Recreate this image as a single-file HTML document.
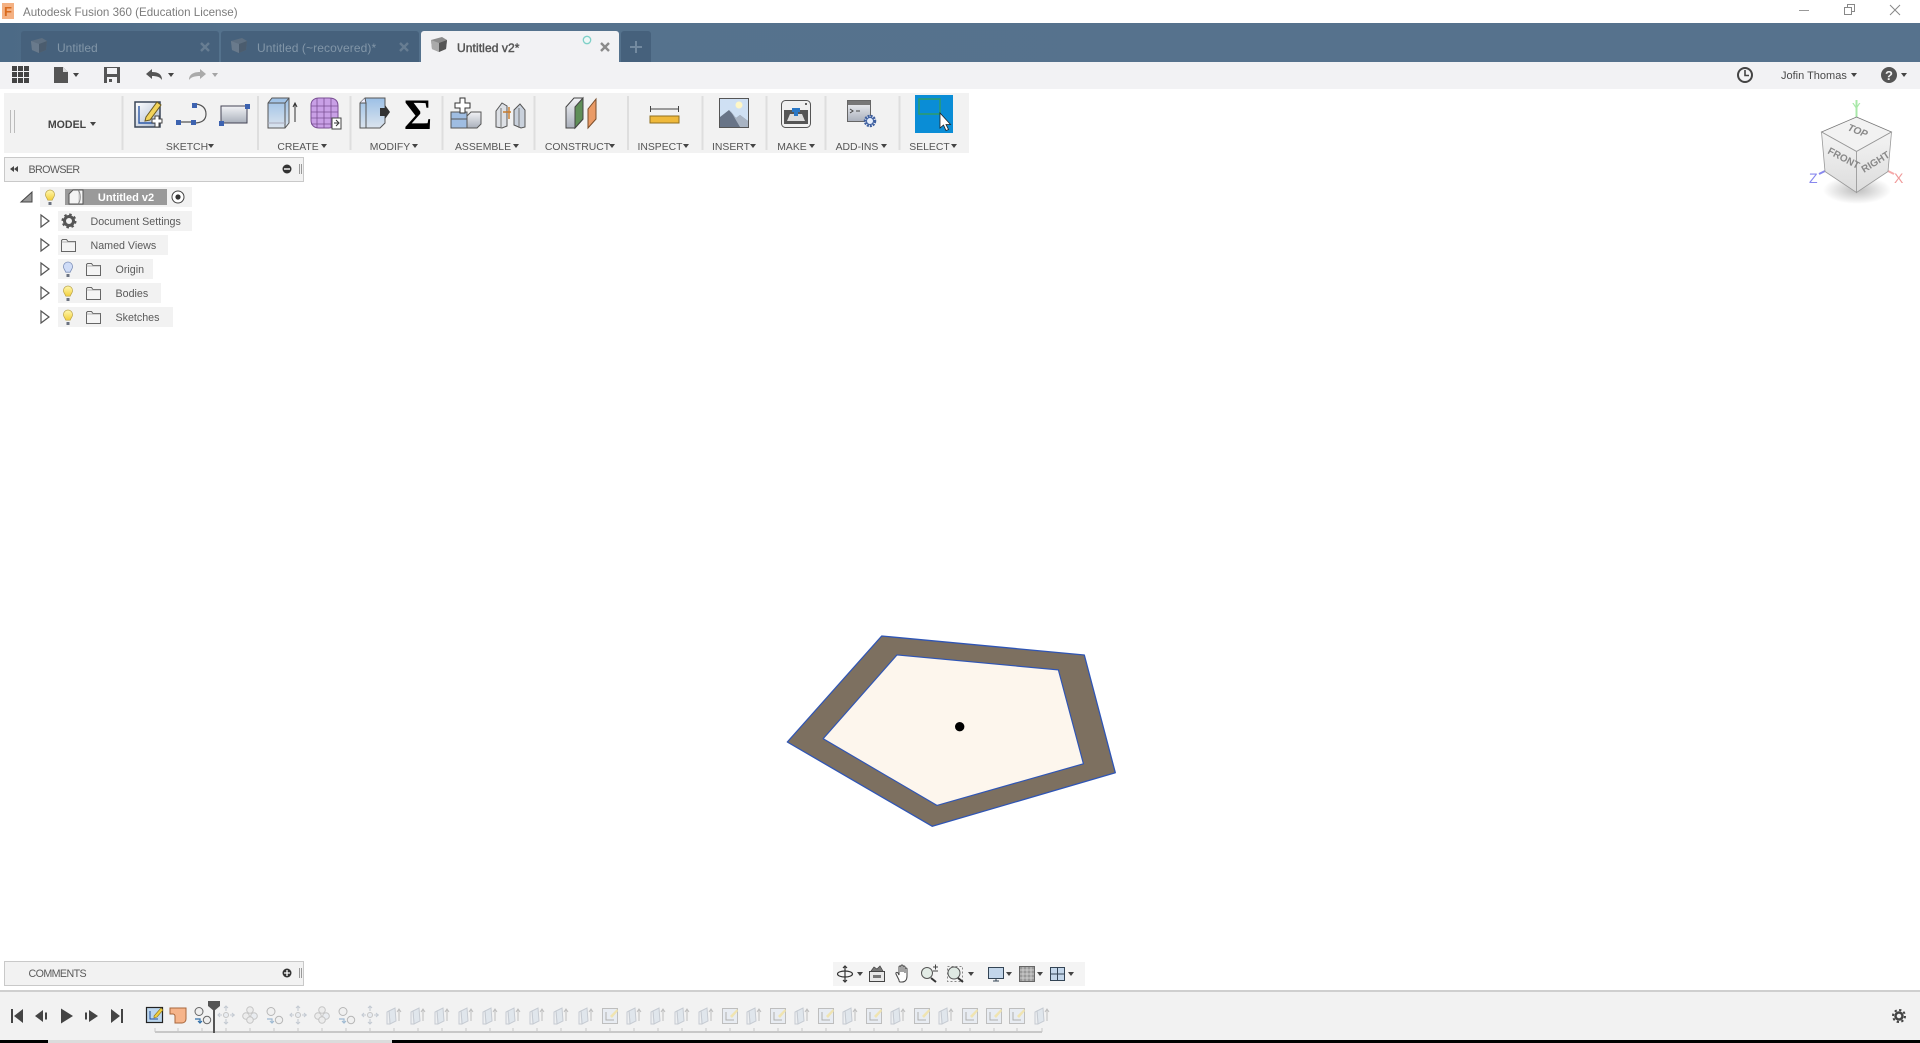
<!DOCTYPE html>
<html><head><meta charset="utf-8"><title>Autodesk Fusion 360</title>
<style>
html,body{margin:0;padding:0;background:#fff;width:1920px;height:1043px;overflow:hidden}
svg{display:block;position:absolute;left:0;top:0}
text{font-family:"Liberation Sans",sans-serif;font-size:11px;fill:#555}
.l{font-size:10.4px;text-anchor:middle;fill:#555}
.t{font-size:10.7px;fill:#5a5a5a}
</style></head><body>
<svg width="1920" height="1043" viewBox="0 0 1920 1043" xmlns="http://www.w3.org/2000/svg">
<defs>
<linearGradient id="tb" x1="0" y1="0" x2="1" y2="0"><stop offset="0" stop-color="#4c6a86"/><stop offset=".12" stop-color="#55728d"/><stop offset="1" stop-color="#56728d"/></linearGradient>
<linearGradient id="gbl" x1="0" y1="0" x2="0" y2="1"><stop offset="0" stop-color="#9cc0e6"/><stop offset="1" stop-color="#dbe4ee"/></linearGradient>
<linearGradient id="ggr" x1="0" y1="0" x2="0" y2="1"><stop offset="0" stop-color="#f2f3f6"/><stop offset="1" stop-color="#aab0bb"/></linearGradient>
<linearGradient id="gsk" x1="0" y1="0" x2="1" y2="1"><stop offset="0" stop-color="#fff"/><stop offset="1" stop-color="#a9b7cc"/></linearGradient>
<linearGradient id="gcube" x1="0" y1="0" x2="0" y2="1"><stop offset="0" stop-color="#f4f4f4"/><stop offset="1" stop-color="#dcdcdc"/></linearGradient>
<linearGradient id="gbulb" x1="0" y1="0" x2="0" y2="1"><stop offset="0" stop-color="#fff8b0"/><stop offset="1" stop-color="#f3cf3b"/></linearGradient>
<radialGradient id="gshadow"><stop offset="0" stop-color="#888" stop-opacity=".55"/><stop offset="1" stop-color="#888" stop-opacity="0"/></radialGradient>
<polygon id="a" points="0,0 6,0 3,4" fill="#444"/>
<g id="tabcube"><path d="M0 3 L11 0 L16 3 L15 12 L8 15 L1 12Z" fill="#8b8b8b"/><path d="M8 6 L16 3 L15 12 L8 15Z" fill="#555"/><path d="M0 3 L8 6 L8 15 L1 12Z" fill="#aaa"/></g>
<g id="bulb"><path d="M-1.5 6h3v3h-3z" fill="#6b7280"/><path d="M0-6a4.6 4.6 0 0 1 4.6 4.6c0 2.2-1.6 3.2-2.4 5.6h-4.4c-.8-2.4-2.4-3.4-2.4-5.6A4.6 4.6 0 0 1 0-6z" fill="url(#gbulb)" stroke="#b9a24a" stroke-width=".7"/></g>
<g id="bulbb"><path d="M-1.5 6h3v3h-3z" fill="#6b7280"/><path d="M0-6a4.6 4.6 0 0 1 4.6 4.6c0 2.2-1.6 3.2-2.4 5.6h-4.4c-.8-2.4-2.4-3.4-2.4-5.6A4.6 4.6 0 0 1 0-6z" fill="#cfdcf7" stroke="#7c8fb8" stroke-width=".8"/></g>
<g id="fold"><path d="M.5 2.5 V13.5 H14.5 V3.5 H7 L5.5 1.5 H1.5Z" fill="#f4f4f4" stroke="#666" stroke-width="1"/><path d="M.5 4H14.5" stroke="#999" stroke-width=".7"/></g>
<polygon id="exp" points="0,0 8,6 0,12" fill="#fff" stroke="#555" stroke-width="1.2"/>
<g id="tx"><path d="M3 4 L9 1 L10 14 L4 17 Z" fill="#c9d6e6" stroke="#8b97a8"/><path d="M3 4 L1 5 V17 L4 17Z" fill="#e8ecf1" stroke="#8b97a8"/><path d="M13 14V3M11 5l2-3 2 3" stroke="#777" fill="none" stroke-width="1"/></g>
<g id="ts"><rect x=".5" y="1.5" width="15" height="15" fill="#dce6f2" stroke="#777"/><path d="M4 5V13H12" stroke="#555" fill="none"/><path d="M8 9l7-7 1 2-6 7z" fill="#eed25a"/></g>
<g id="tm"><circle cx="8" cy="9" r="2.5" fill="#dfe6ee" stroke="#888"/><path d="M8 0v5M8 13v5M0 9h4M12 9h5M6 2l2-2 2 2M6 16l2 2 2-2M2 7l-2 2 2 2M14 7l2 2-2 2" stroke="#8595a8" fill="none" stroke-width="1.1"/></g>
<g id="tc"><circle cx="8" cy="4" r="3.3" fill="#e4e4e4" stroke="#888"/><circle cx="4" cy="10" r="3.3" fill="#e4e4e4" stroke="#888"/><circle cx="12" cy="10" r="3.3" fill="#dfe6ee" stroke="#888"/><circle cx="8" cy="14" r="3.3" fill="#e4e4e4" stroke="#888"/></g>
<g id="ta"><circle cx="5" cy="4.5" r="4" fill="#eee" stroke="#666"/><circle cx="13" cy="13" r="3.7" fill="#eee" stroke="#666"/><path d="M1 12h5v4M4 14l2 2 2-2" stroke="#2f6ea8" fill="none" stroke-width="1.2"/></g>
</defs>

<!-- title bar -->
<rect width="1920" height="23" fill="#fff"/>
<rect x="2" y="3" width="12" height="16" fill="#f4b183"/>
<text x="4" y="16" style="font-size:13px;font-weight:bold;fill:#d96a1d">F</text>
<text x="23" y="16" style="font-size:11.6px;fill:#7c7c7c">Autodesk Fusion 360 (Education License)</text>
<path d="M1799 10.5H1809" stroke="#999"/>
<path d="M1844.5 7.5H1851.5V14.5H1844.5ZM1847.5 7.5V4.5H1854.5V11.5H1851.5" fill="none" stroke="#888"/>
<path d="M1890 5L1900 15M1900 5L1890 15" stroke="#888"/>

<!-- tab bar -->
<rect y="23" width="1920" height="39" fill="url(#tb)"/>
<path d="M21 62V34a3 3 0 0 1 3-3H216a3 3 0 0 1 3 3V62Z" fill="#46617c"/>
<path d="M221 62V34a3 3 0 0 1 3-3H416a3 3 0 0 1 3 3V62Z" fill="#46617c"/>
<path d="M621 62V34a3 3 0 0 1 3-3H648a3 3 0 0 1 3 3V62Z" fill="#46617c"/>
<path d="M421 62V34a3 3 0 0 1 3-3H616a3 3 0 0 1 3 3V62Z" fill="#f2f2f4"/>
<use href="#tabcube" x="31" y="38" opacity=".35"/>
<use href="#tabcube" x="231" y="38" opacity=".35"/>
<use href="#tabcube" x="431" y="37"/>
<text x="57" y="52" style="font-size:12px;fill:#8296a8">Untitled</text>
<text x="257" y="52" style="font-size:12px;fill:#8296a8;letter-spacing:.1px">Untitled (~recovered)*</text>
<text x="457" y="52" style="font-size:12px;fill:#555;stroke:#555;stroke-width:.45;letter-spacing:.1px">Untitled v2*</text>
<path d="M201 43l8 8M209 43l-8 8M400 43l8 8M408 43l-8 8" stroke="#677d92" stroke-width="2.4"/>
<path d="M601 43l8 8M609 43l-8 8" stroke="#8a8a8a" stroke-width="2.4"/>
<path d="M630 47h12M636 41v12" stroke="#738aa0" stroke-width="2"/>
<circle cx="587" cy="40" r="3.7" fill="#eef7f6" stroke="#7fd0c8" stroke-width="1.3"/>

<!-- quick toolbar -->
<rect y="62" width="1920" height="27" fill="#f2f2f4"/>
<path d="M12 66h5v5h-5zM18 66h5v5h-5zM24 66h5v5h-5zM12 72h5v5h-5zM18 72h5v5h-5zM24 72h5v5h-5zM12 78h5v5h-5zM18 78h5v5h-5zM24 78h5v5h-5z" fill="#444"/>
<path d="M54 67h9l5 5v11H54z" fill="#555"/><path d="M63 67v5h5" fill="#ddd"/>
<use href="#a" x="73" y="73"/>
<path d="M104 67h16v16h-16z" fill="#555"/><rect x="107" y="68" width="10" height="6" fill="#f2f2f4"/><rect x="107" y="77" width="10" height="6" fill="#f2f2f4"/><rect x="109" y="79" width="3" height="3" fill="#555"/>
<path d="M146 74l6-5v3c6 0 10 2 10 8-2-3-5-4-10-4v3z" fill="#555"/>
<use href="#a" x="168" y="73"/>
<path d="M206 74l-6-5v3c-6 0-11 2-11 8 2-3 6-4 11-4v3z" fill="#aaa"/>
<use href="#a" x="212" y="73" opacity=".45"/>
<circle cx="1745" cy="75" r="7" fill="none" stroke="#444" stroke-width="2"/><path d="M1745 70v5.5h4" fill="none" stroke="#444" stroke-width="1.6"/>
<text x="1781" y="79" style="font-size:11px;fill:#4a4a4a">Jofin Thomas</text>
<use href="#a" x="1851" y="73"/>
<circle cx="1889" cy="75" r="8" fill="#555"/><text x="1889" y="80" style="font-size:13px;font-weight:bold;fill:#f2f2f2;text-anchor:middle">?</text>
<use href="#a" x="1901" y="73"/>

<!-- ribbon -->
<rect x="4" y="93" width="965" height="60" fill="#f2f2f2"/>
<path d="M10.5 110V133M14.5 110V133" stroke="#bbb"/>
<text x="67" y="128" style="font-size:10.6px;font-weight:bold;text-anchor:middle;fill:#444">MODEL</text>
<use href="#a" x="90" y="122"/>
<g fill="#dedede">
<rect x="121.500" y="96" width="2" height="54"/><rect x="257" y="96" width="2" height="54"/><rect x="349.500" y="96" width="2" height="54"/><rect x="441.500" y="96" width="2" height="54"/><rect x="533.500" y="96" width="2" height="54"/><rect x="627" y="96" width="2" height="54"/><rect x="701.500" y="96" width="2" height="54"/><rect x="765.500" y="96" width="2" height="54"/><rect x="824.500" y="96" width="2" height="54"/><rect x="898.500" y="96" width="2" height="54"/>
</g>
<text class="l" x="187" y="150">SKETCH</text><use href="#a" x="208" y="144" />
<text class="l" x="298" y="150">CREATE</text><use href="#a" x="321" y="144"/>
<text class="l" x="390" y="150">MODIFY</text><use href="#a" x="412" y="144"/>
<text class="l" x="483" y="150">ASSEMBLE</text><use href="#a" x="513" y="144"/>
<text class="l" x="577.500" y="150">CONSTRUCT</text><use href="#a" x="609" y="144"/>
<text class="l" x="660" y="150">INSPECT</text><use href="#a" x="683" y="144"/>
<text class="l" x="731" y="150">INSERT</text><use href="#a" x="750" y="144"/>
<text class="l" x="792" y="150">MAKE</text><use href="#a" x="809" y="144"/>
<text class="l" x="857" y="150">ADD-INS</text><use href="#a" x="881" y="144"/>
<text class="l" x="929.500" y="150">SELECT</text><use href="#a" x="951" y="144"/>

<!-- sketch -->
<rect x="135" y="102" width="25" height="25" fill="url(#gsk)" stroke="#3b4658" stroke-width="1.5"/>
<path d="M139 106V123H156" stroke="#2e5aa8" fill="none" stroke-width="1.4"/>
<path d="M146 117l11-15 4 3-11 15-5 1z" fill="#f2d35a" stroke="#6b5a20"/>
<path d="M152 119h3v-3h4v3h3v4h-3v4h-4v-4h-3z" fill="#fff" stroke="#444"/>
<!-- line -->
<path d="M178 122H194M194 104c8 0 12 4 12 10s-4 9-12 9" fill="none" stroke="#555" stroke-width="1.2"/>
<rect x="176" y="120" width="5" height="5" fill="#3d63b0"/><rect x="191" y="120" width="5" height="5" fill="#3d63b0"/><rect x="192" y="103" width="5" height="5" fill="#3d63b0"/>
<!-- rect -->
<rect x="221" y="106" width="26" height="17" fill="url(#ggr)" stroke="#445" stroke-width="1"/>
<rect x="219" y="121" width="5" height="5" fill="#3d63b0"/><rect x="245" y="104" width="5" height="5" fill="#3d63b0"/>
<!-- extrude -->
<path d="M268 103l4-5h17v25l-4 5h-17z" fill="url(#gbl)" stroke="#555"/><path d="M285 103v25M268 103h17l4-5" fill="none" stroke="#555"/><path d="M268 123h17" stroke="#aab"/>
<path d="M295 122V104M293 107l2-4 2 4" stroke="#333" fill="none"/>
<!-- form -->
<path d="M311 105c0-5 4-7 8-7h10c6 0 9 3 9 8v14c0 5-5 8-9 8h-10c-5 0-8-3-8-8z" fill="#c9a0e6" stroke="#7a4f94"/>
<path d="M311 106h27M311 112h27M311 118h27M311 124h27M317 98v30M324 98v30M331 98v30" stroke="#7a4f94" fill="none" stroke-width=".8"/>
<rect x="332" y="118" width="9" height="11" fill="#fff" stroke="#444"/><path d="M334 123h4M336 120l3 3-3 3" fill="none" stroke="#333"/>
<!-- modify -->
<path d="M360 103l5-5h20v25l-5 5h-20z" fill="url(#gbl)" stroke="#555"/><path d="M366 103v25M360 103h6l-1-5" fill="#eef" stroke="#555"/><path d="M380 108h5v-3l5 7-5 7v-3h-5z" fill="#333"/>
<!-- sigma -->
<text x="404" y="129" style="font-size:43px;fill:#000;font-family:'Liberation Serif',serif;font-weight:bold">Σ</text>
<!-- assemble -->
<path d="M451 112h16v16h-16z" fill="#9fbde2" stroke="#555"/><path d="M467 116l4-4h10v12l-4 4h-10z" fill="url(#ggr)" stroke="#555"/><path d="M451 119h16" stroke="#555"/>
<path d="M455 103h5v-5h5v5h5v5h-5v5h-5v-5h-5z" fill="#fff" stroke="#333"/>
<!-- joint -->
<path d="M496 127V111l6-8 5 3v20l-5 2z" fill="#dde0e5" stroke="#555"/><path d="M525 127V110l-5-6-6 6v15l7 3z" fill="#c9d1dc" stroke="#555"/><path d="M503 112h8M509 107v12" stroke="#c77a2b" stroke-width="1.4"/><path d="M501 128V108M519 128V108" stroke="#777"/>
<!-- construct -->
<path d="M566 107l8-9h9v21l-8 9h-9z" fill="url(#ggr)" stroke="#444"/><path d="M575 107l8-9v21l-8 9z" fill="#5f8f58" stroke="#444"/>
<path d="M588 109l8-10v20l-8 9z" fill="#ea9b66" stroke="#7a4d2a"/>
<!-- inspect -->
<path d="M650.500 106v6M678.500 106v6M650.500 109h28" stroke="#444" fill="none"/>
<rect x="650" y="116" width="29" height="7" fill="#efb93b" stroke="#907020"/>
<!-- insert -->
<rect x="719.500" y="98.500" width="29" height="29" fill="#cfe0f3" stroke="#555"/>
<circle cx="739" cy="105" r="3.5" fill="#fff7c6"/>
<path d="M720 127v-10l9-7 7 8 4-3 8 6v6z" fill="#687487"/><path d="M730 110l6 8 4-3 8 6v6h-8z" fill="#a9b4c3"/>
<!-- make -->
<rect x="781.500" y="100.500" width="29" height="27" rx="4" fill="#f0f0f0" stroke="#555"/>
<rect x="784" y="110" width="24" height="14" fill="#555"/><path d="M787 121l3-7h12l3 7z" fill="#ddd"/><path d="M792 108h8v4h-2v4h-4v-4h-2z" fill="#2a77c5"/><circle cx="806" cy="104" r="1" fill="#333"/>
<!-- add-ins -->
<rect x="847.500" y="100.500" width="23" height="21" fill="url(#ggr)" stroke="#666"/><rect x="848" y="101" width="22" height="4" fill="#777"/>
<path d="M850 109l3 2-3 2M856 111h4" stroke="#444" fill="none"/>
<circle cx="870" cy="121" r="5" fill="#e6eefb" stroke="#3f60a0" stroke-width="2.5" stroke-dasharray="2 1"/><circle cx="870" cy="121" r="3.5" fill="#e6eefb" stroke="#3f60a0"/>
<!-- select -->
<rect x="915" y="95" width="38" height="38" fill="#0a8dd6"/>
<rect x="919" y="99" width="21" height="15" fill="none" stroke="#2e9c6a" stroke-width="1.5"/>
<path d="M940 113V128L943.500 125L946 130.500L948.500 129.500L946 124.500H950.500Z" fill="#fff" stroke="#222" stroke-width=".8"/>

<!-- browser -->
<rect x="4.500" y="157.500" width="299" height="24" fill="#f2f2f2" stroke="#c9c9c9"/>
<path d="M10 169l4-3v6zM14 169l4-3v6z" fill="#444"/>
<text x="28.500" y="173" class="t" style="letter-spacing:-.6px">BROWSER</text>
<circle cx="287" cy="169" r="4.500" fill="#333"/><path d="M284 169h6" stroke="#fff" stroke-width="1.4"/>
<path d="M299.500 164v10M301.500 164v10" stroke="#999"/>

<g fill="#f2f2f2">
<rect x="40" y="187" width="152" height="20"/>
<rect x="58" y="211" width="134" height="20"/>
<rect x="58" y="235" width="110" height="20"/>
<rect x="58" y="259" width="95" height="20"/>
<rect x="58" y="283" width="103" height="20"/>
<rect x="58" y="307" width="115" height="20"/>
</g>
<path d="M21 202L32 192V202Z" fill="#999" stroke="#444"/>
<use href="#bulb" x="50" y="196"/>
<rect x="65" y="189" width="102" height="16" fill="#9a9a9a"/>
<path d="M69 204V194l4-4h10v14z" fill="#f4f4f4" stroke="#555"/><path d="M78 190c3 3 3 11 0 14" fill="#ddd" stroke="#888"/>
<text x="126" y="201" style="font-size:11px;font-weight:bold;fill:#fff;text-anchor:middle">Untitled v2</text>
<circle cx="178" cy="197" r="6" fill="#fff" stroke="#444"/><circle cx="178" cy="197" r="2.600" fill="#333"/>

<use href="#exp" x="41" y="215"/><use href="#exp" x="41" y="239"/><use href="#exp" x="41" y="263"/><use href="#exp" x="41" y="287"/><use href="#exp" x="41" y="311"/>
<circle cx="69" cy="221" r="4.500" fill="none" stroke="#555" stroke-width="3"/><circle cx="69" cy="221" r="6.500" fill="none" stroke="#555" stroke-width="2" stroke-dasharray="2.500 2.600"/>
<use href="#fold" x="61" y="238"/>
<use href="#bulbb" x="68" y="268"/><use href="#fold" x="86" y="262"/>
<use href="#bulb" x="68" y="292"/><use href="#fold" x="86" y="286"/>
<use href="#bulb" x="68" y="316"/><use href="#fold" x="86" y="310"/>
<text x="90.500" y="225" class="t">Document Settings</text>
<text x="90.500" y="249" class="t">Named Views</text>
<text x="115.500" y="273" class="t">Origin</text>
<text x="115.500" y="297" class="t">Bodies</text>
<text x="115.500" y="321" class="t">Sketches</text>

<!-- view cube -->
<ellipse cx="1857" cy="190" rx="34" ry="14" fill="url(#gshadow)"/>
<path d="M1856.500 100V117" stroke="#a8e8a8" stroke-width="2"/>
<text x="1852" y="112" style="font-size:13px;fill:#a8e8a8">Y</text>
<path d="M1825 171l-6 3" stroke="#8888ee" stroke-width="2"/><text x="1809" y="183" style="font-size:14px;fill:#8888ee">Z</text>
<path d="M1888 171l6 3" stroke="#f5aaaa" stroke-width="2"/><text x="1894" y="183" style="font-size:14px;fill:#f09a9a">X</text>
<path d="M1856.500 117L1891.500 132L1856.500 151.500L1821.500 132Z" fill="#f2f2f2" stroke="#777" stroke-width=".8"/>
<path d="M1821.500 132L1856.500 151.500V192.500L1825 171.500Z" fill="url(#gcube)" stroke="#999" stroke-width=".8"/>
<path d="M1891.500 132L1856.500 151.500V192.500L1888 171.500Z" fill="url(#gcube)" stroke="#999" stroke-width=".8"/>
<text transform="translate(1847,130) rotate(22)" style="font-size:10px;fill:#888;font-style:italic;font-weight:bold">TOP</text>
<text transform="translate(1827,153) rotate(28)" style="font-size:10px;fill:#888;font-weight:bold">FRONT</text>
<text transform="translate(1864,173) rotate(-32)" style="font-size:10px;fill:#888;font-weight:bold">RIGHT</text>

<!-- shape -->
<path fill-rule="evenodd" d="M881.700 636L1084.300 655L1115.300 772.700L932.300 826.300L787.300 742ZM897 655L823.300 738.700L937 805.300L1083.300 763.700L1058.300 670Z" fill="#7d7060" stroke="#2f55b5" stroke-width="1.300" stroke-linejoin="round"/>
<path d="M897 655L1058.300 670L1083.300 763.700L937 805.300L823.300 738.700Z" fill="#fdf6ed" stroke="#2f55b5" stroke-width="1"/>
<circle cx="959.700" cy="726.700" r="4.700" fill="#000"/>

<!-- comments -->
<rect x="4.500" y="961.500" width="299" height="24" fill="#f2f2f2" stroke="#c9c9c9"/>
<text x="28.500" y="977" class="t" style="letter-spacing:-.6px">COMMENTS</text>
<circle cx="287" cy="973" r="4.500" fill="#333"/><path d="M284 973h6M287 970v6" stroke="#fff" stroke-width="1.300"/>
<path d="M299.500 968v10M301.500 968v10" stroke="#999"/>

<!-- nav bar -->
<rect x="833" y="962" width="252" height="24" fill="#f4f4f4"/>
<ellipse cx="845" cy="974" rx="7.500" ry="3" fill="none" stroke="#333" stroke-width="1.200"/><path d="M845 966v16M843 968l2-2 2 2M843 980l2 2 2-2" stroke="#333" fill="none" stroke-width="1.200"/>
<use href="#a" x="857" y="972"/>
<rect x="869.500" y="971.500" width="15" height="10" fill="#e8e8e8" stroke="#444"/><rect x="873" y="975" width="8" height="3" fill="#777"/><path d="M871 971l3-4 3 2 3-3 3 5" fill="#777" stroke="#444" stroke-width=".7"/>
<path d="M899 980l-3-6c-.6-1.800 1.200-2 2-1l1 2v-8c0-1.300 2-1.300 2 0v5-6c0-1.300 2-1.300 2 0v6-5c0-1.300 2-1.300 2 0v6-4c0-1.300 2-1.300 2 0v7c0 4-2 6-5 6h-2c-.6 0-1.100-1-1-2z" fill="#fff" stroke="#444"/>
<circle cx="927" cy="973" r="5.500" fill="#e3ece6" stroke="#555"/><path d="M931 978l5 4" stroke="#333" stroke-width="2"/><path d="M933 967h5M935.500 964.500v5M933 971h5" stroke="#444"/>
<rect x="947.500" y="966.500" width="15" height="15" fill="none" stroke="#888" stroke-dasharray="2 2"/><circle cx="954" cy="973" r="6" fill="#dfe9e3" stroke="#555"/><path d="M958 978l5 4" stroke="#333" stroke-width="2"/>
<use href="#a" x="968" y="972"/>
<rect x="988.500" y="967.500" width="15" height="11" fill="#c3d6ea" stroke="#345"/><path d="M993 981h6M996 979v2" stroke="#345"/>
<use href="#a" x="1006" y="972"/>
<rect x="1019.500" y="966.500" width="15" height="15" fill="#999" stroke="#666"/><path d="M1023 967v14M1027 967v14M1031 967v14M1020 970h14M1020 974h14M1020 978h14" stroke="#ddd" stroke-width=".7"/>
<use href="#a" x="1037" y="972"/>
<rect x="1050.500" y="967.500" width="14" height="13" fill="#c3d6ea" stroke="#345"/><path d="M1057.500 968v12M1051 974h13" stroke="#345"/>
<use href="#a" x="1068" y="972"/>

<!-- timeline -->
<rect y="990" width="1920" height="2" fill="#cfcfcf"/>
<rect y="992" width="1920" height="48" fill="#f2f2f2"/>
<rect y="1040" width="1920" height="3" fill="#000"/><rect x="48" y="1040" width="344" height="3" fill="#dcdcdc"/>
<path d="M11 1009h2v14h-2zM23 1009v14l-9-7z" fill="#444"/>
<path d="M35 1016l8-6v12zM45 1012.500h2v7h-2z" fill="#444"/>
<path d="M61 1008.500v15l12-7.500z" fill="#444"/>
<path d="M85 1012.500h2v7h-2zM89 1010l9 6-9 6z" fill="#444"/>
<path d="M111 1009l9 7-9 7zM121 1009h2v14h-2z" fill="#444"/>

<g stroke="#c8c8c8" fill="none">
<path d="M155 1032H1042" stroke-width="2"/>
<path d="M155 1028v4M178 1028v4M202 1028v4M226 1028v4M250 1028v4M274 1028v4M298 1028v4M322 1028v4M346 1028v4M370 1028v4M394 1028v4M418 1028v4M442 1028v4M466 1028v4M490 1028v4M513 1028v4M537 1028v4M561 1028v4M586 1028v4M610 1028v4M634 1028v4M658 1028v4M682 1028v4M706 1028v4M730 1028v4M754 1028v4M778 1028v4M802 1028v4M826 1028v4M850 1028v4M874 1028v4M898 1028v4M922 1028v4M946 1028v4M970 1028v4M994 1028v4M1017 1028v4M1042 1028v4"/>
</g>
<rect x="146.500" y="1007.500" width="16" height="15" fill="#bcd6ee" stroke="#222" stroke-width="1.200"/>
<path d="M150 1011V1019H158" stroke="#1f4f9a" fill="none"/>
<path d="M154 1016l7-8 2 2-6 7-3 1z" fill="#f2cf3f" stroke="#8a7420" stroke-width=".6"/>
<path d="M170 1008h16v11c0 2.500-2 4-4 4h-7v-7c0-1-1-2-2-2h-3z" fill="#f6b48a" stroke="#a8673c"/>
<use href="#ta" x="194" y="1007"/>
<g opacity=".42">
<use href="#tm" x="218" y="1006"/><use href="#tc" x="242" y="1006"/><use href="#ta" x="266" y="1007"/>
<use href="#tm" x="290" y="1006"/><use href="#tc" x="314" y="1006"/><use href="#ta" x="338" y="1007"/>
<use href="#tm" x="362" y="1006"/>
<use href="#tx" x="386" y="1007"/><use href="#tx" x="410" y="1007"/><use href="#tx" x="434" y="1007"/><use href="#tx" x="458" y="1007"/><use href="#tx" x="482" y="1007"/>
<use href="#tx" x="505" y="1007"/><use href="#tx" x="529" y="1007"/><use href="#tx" x="553" y="1007"/><use href="#tx" x="578" y="1007"/>
<use href="#ts" x="602" y="1007"/>
<use href="#tx" x="626" y="1007"/><use href="#tx" x="650" y="1007"/><use href="#tx" x="674" y="1007"/><use href="#tx" x="698" y="1007"/>
<use href="#ts" x="722" y="1007"/><use href="#tx" x="746" y="1007"/>
<use href="#ts" x="770" y="1007"/><use href="#tx" x="794" y="1007"/>
<use href="#ts" x="818" y="1007"/><use href="#tx" x="842" y="1007"/>
<use href="#ts" x="866" y="1007"/><use href="#tx" x="890" y="1007"/>
<use href="#ts" x="914" y="1007"/><use href="#tx" x="938" y="1007"/>
<use href="#ts" x="962" y="1007"/><use href="#ts" x="986" y="1007"/><use href="#ts" x="1009" y="1007"/>
<use href="#tx" x="1034" y="1007"/>
</g>
<path d="M208 1001h12v5l-6 5-6-5z" fill="#555"/><rect x="213" y="1006" width="2" height="27" fill="#555"/>
<circle cx="1899" cy="1016" r="3.500" fill="none" stroke="#444" stroke-width="2.500"/><circle cx="1899" cy="1016" r="6" fill="none" stroke="#444" stroke-width="2" stroke-dasharray="2.300 2.400"/>
</svg>
</body></html>
